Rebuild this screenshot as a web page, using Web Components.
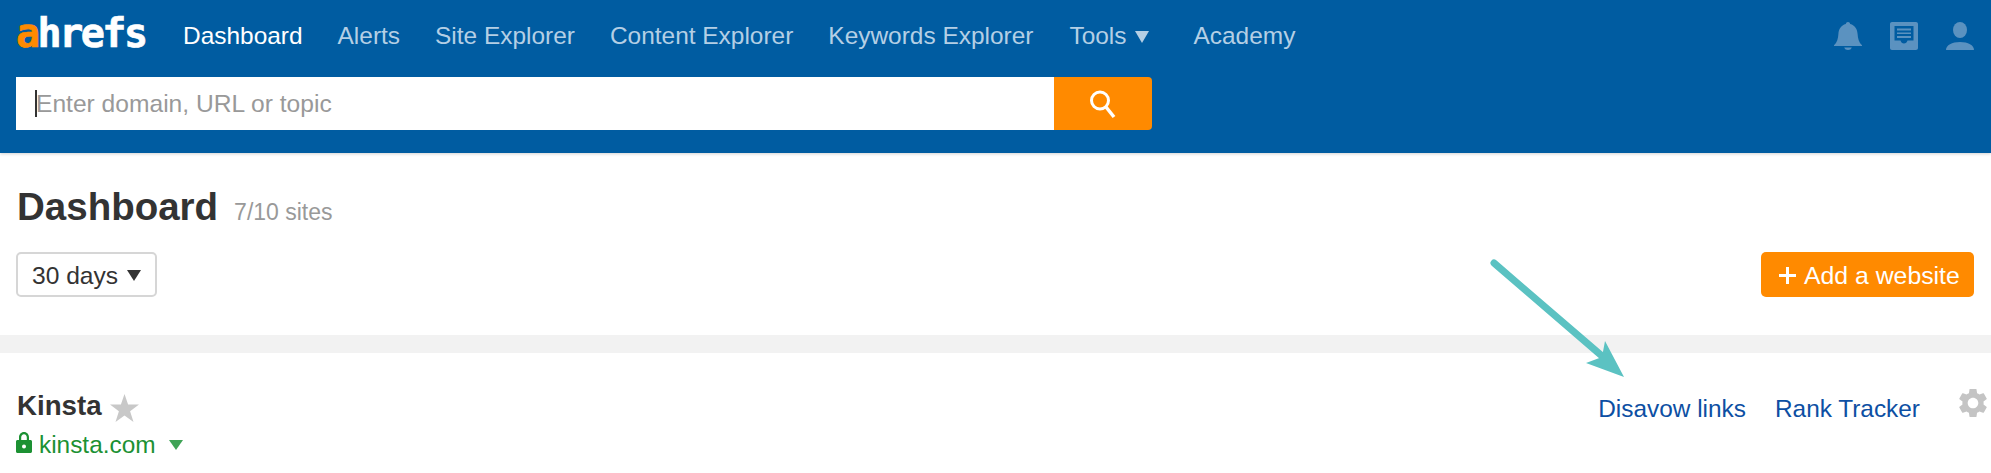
<!DOCTYPE html>
<html>
<head>
<meta charset="utf-8">
<title>Ahrefs Dashboard</title>
<style>
  html, body { margin: 0; padding: 0; background: #fff; overflow: hidden; }
  body { font-family: "Liberation Sans", Arial, sans-serif; color: #333; position: relative; height: 473px; }
</style>
</head>
<body>
<ah-topbar>
  <ah-nav-link active>Dashboard</ah-nav-link>
  <ah-nav-link>Alerts</ah-nav-link>
  <ah-nav-link>Site Explorer</ah-nav-link>
  <ah-nav-link>Content Explorer</ah-nav-link>
  <ah-nav-link>Keywords Explorer</ah-nav-link>
  <ah-nav-link menu>Tools</ah-nav-link>
  <ah-nav-link>Academy</ah-nav-link>
</ah-topbar>
<ah-dash-head></ah-dash-head>
<ah-site-row name="Kinsta" domain="kinsta.com">
  <a slot="links">Disavow links</a>
  <a slot="links">Rank Tracker</a>
</ah-site-row>
<ah-callout></ah-callout>

<script>
class AhNavLink extends HTMLElement {
  constructor() {
    super();
    this.attachShadow({ mode: 'open' });
  }

  connectedCallback() {
    const caret = this.hasAttribute('menu') ? '<span class="caret"></span>' : '';
    this.shadowRoot.innerHTML = `
      <style>
        :host {
          display: flex;
          align-items: center;
          font-size: 24.45px;
          line-height: 30px;
          color: #b4cfe5;
          white-space: nowrap;
        }
        :host([active]) { color: #fff; }
        :host([menu]) { padding-right: 9px; margin-left: 1px; }
        .caret {
          width: 0;
          height: 0;
          margin-left: 9px;
          margin-top: 2px;
          border-left: 7.5px solid transparent;
          border-right: 7.5px solid transparent;
          border-top: 12px solid #b4cfe5;
        }
      </style>
      <slot></slot>${caret}`;
  }
}

class AhTopbar extends HTMLElement {
  constructor() {
    super();
    this.attachShadow({ mode: 'open' });
  }

  connectedCallback() {
    this.shadowRoot.innerHTML = `
      <style>
        :host {
          display: block;
          background: #005ca1;
          height: 153px;
          box-shadow: 0 1px 3px rgba(0, 0, 0, .18);
          position: relative;
        }
        .top {
          display: flex;
          align-items: center;
          height: 77px;
          padding: 0 17px 5px 16px;
          box-sizing: border-box;
        }
        .logo {
          width: 167px;
          font: bold 40px/40px "DejaVu Sans Mono", monospace;
          letter-spacing: -2.5px;
          color: #fff;
          -webkit-text-stroke: .7px currentColor;
          margin-top: -6px;
        }
        .logo b { color: #ff8a00; }
        nav { display: flex; gap: 35px; flex: 1; }
        .icons { display: flex; gap: 28px; }
        .icons svg { display: block; width: 28px; height: 28px; fill: #5b92c0; }
        .search {
          display: flex;
          width: 1136px;
          height: 53px;
          margin-left: 16px;
        }
        .field {
          flex: 1;
          background: #fff;
          display: flex;
          align-items: center;
          padding-left: 19px;
          font-size: 24.6px;
          color: #999;
        }
        .field i {
          width: 2px;
          height: 27px;
          margin-right: -1px;
          background: #333;
        }
        .go {
          width: 98px;
          background: #ff8a00;
          border-radius: 0 4px 4px 0;
          display: flex;
          align-items: center;
          justify-content: center;
        }
        .go svg { display: block; width: 30px; height: 30px; }
      </style>
      <div class="top">
        <div class="logo"><b>a</b>hrefs</div>
        <nav><slot></slot></nav>
        <div class="icons">
          <svg viewBox="0 0 28 28"><path d="M14 0c1.2 0 2 .8 2.2 1.9C21 3.100 23.300 7 23.600 12c.3 4.800 1.200 8.200 4.400 11.300V24H0v-.7C3.200 20.200 4.100 16.800 4.400 12 4.700 7 7 3.100 11.800 1.900 12 .8 12.800 0 14 0z"/><path d="M10.200 25.500h7.600C17.300 27.200 15.800 28 14 28s-3.300-.8-3.800-2.500z"/></svg>
          <svg viewBox="0 0 28 28"><path fill-rule="evenodd" d="M2 0h24c1.100 0 2 .9 2 2v24c0 1.100-.9 2-2 2H2c-1.100 0-2-.9-2-2V2C0 .9.900 0 2 0zm2.500 4v14.500h6c.5 1.900 1.800 3 3.500 3s3-1.100 3.500-3h6V4h-19z"/><path d="M7 6.500h14v2H7zM7 10.500h14v1.500H7zM7 14h14v2H7z"/></svg>
          <svg viewBox="0 0 28 28"><ellipse cx="14" cy="8" rx="7" ry="8"/><path d="M0 28c0-5 6-8 14-8s14 3 14 8H0z"/></svg>
        </div>
      </div>
      <div class="search">
        <div class="field"><i></i><span>Enter domain, URL or topic</span></div>
        <div class="go">
          <svg viewBox="0 0 30 30" fill="none" stroke="#fff"><circle cx="12" cy="11.500" r="8.500" stroke-width="3"/><path d="M18 18l8 10" stroke-width="3.500"/></svg>
        </div>
      </div>`;
  }
}

class AhDashHead extends HTMLElement {
  constructor() {
    super();
    this.attachShadow({ mode: 'open' });
  }

  connectedCallback() {
    this.shadowRoot.innerHTML = `
      <style>
        :host {
          display: block;
          padding: 35px 17px 38px 16px;
        }
        .title { display: flex; align-items: baseline; gap: 16px; padding-left: 1px; }
        h1 { margin: 0; font-size: 38.5px; line-height: 38px; font-weight: bold; color: #333; }
        .count { font-size: 23px; color: #999; }
        .tools {
          display: flex;
          justify-content: space-between;
          align-items: flex-start;
          margin-top: 26px;
        }
        .period {
          box-sizing: border-box;
          width: 141px;
          height: 45px;
          border: 2px solid #d6d6d6;
          border-radius: 5px;
          display: flex;
          align-items: center;
          padding: 2px 0 0 14px;
          font-size: 24.6px;
          color: #333;
        }
        .period i {
          margin-left: 9px;
          border-left: 7px solid transparent;
          border-right: 7px solid transparent;
          border-top: 11px solid #333;
        }
        .add {
          box-sizing: border-box;
          width: 213px;
          height: 45px;
          background: #ff8a00;
          border-radius: 5px;
          color: #fff;
          font-size: 24.8px;
          display: flex;
          align-items: center;
          padding: 2px 0 0 18px;
          gap: 8px;
        }
        .add svg { width: 17px; height: 17px; display: block; }
      </style>
      <div class="title"><h1>Dashboard</h1><span class="count">7/10 sites</span></div>
      <div class="tools">
        <div class="period"><span>30 days</span><i></i></div>
        <div class="add">
          <svg viewBox="0 0 17 17"><path d="M7 0h3v7h7v3h-7v7H7v-7H0V7h7z" fill="#fff"/></svg>
          <span>Add a website</span>
        </div>
      </div>`;
  }
}

class AhSiteRow extends HTMLElement {
  constructor() {
    super();
    this.attachShadow({ mode: 'open' });
  }

  connectedCallback() {
    this.shadowRoot.innerHTML = `
      <style>
        :host {
          display: flex;
          justify-content: space-between;
          align-items: flex-start;
          border-top: 18px solid #f2f2f2;
          padding: 37px 4px 0 16px;
        }
        .name {
          display: flex;
          align-items: center;
          gap: 8px;
          font-size: 27.7px;
          line-height: 30px;
          font-weight: bold;
          color: #333;
          padding-left: 1px;
        }
        .star { display: block; width: 29px; height: 28px; margin-top: 4px; fill: #c8c8c8; }
        .domain {
          display: flex;
          align-items: center;
          margin-top: 8px;
          font-size: 24.4px;
          line-height: 30px;
          color: #1c9133;
        }
        .lock { display: block; width: 16px; height: 21px; margin-right: 7px; margin-top: -5px; fill: #1c9133; }
        .domain i {
          margin-left: 13px;
          margin-top: -1px;
          border-left: 7px solid transparent;
          border-right: 7px solid transparent;
          border-top: 10px solid #3fa356;
        }
        .right { display: flex; align-items: flex-start; }
        .links { display: flex; gap: 29px; font-size: 24.4px; line-height: 30px; color: #0d4fa3; padding-top: 4px; }
        .gear { display: block; width: 28px; height: 28px; margin-left: 39px; fill: #c4c4c4; margin-top: -1px; }
      </style>
      <div>
        <div class="name"><span>${this.getAttribute('name')}</span>
          <svg class="star" viewBox="0 0 29 28"><path d="M14.500 0l3.600 10.500H29l-8.900 6.700L23.500 28l-9-6.600L5.500 28l3.400-10.800L0 10.500h10.900z"/></svg>
        </div>
        <div class="domain">
          <svg class="lock" viewBox="0 0 16 21"><path fill-rule="evenodd" d="M3 8V5.500C3 2.400 5 0 8 0s5 2.400 5 5.500V8h1.500c.8 0 1.500.7 1.500 1.500V19.500c0 .8-.7 1.500-1.500 1.500h-13C.7 21 0 20.300 0 19.500V9.500C0 8.700.7 8 1.500 8H3zm2.200 0h5.600V5.500c0-1.900-1.100-3.300-2.800-3.300S5.200 3.600 5.200 5.500V8zM8 12.500a2 2 0 1 0 0 4 2 2 0 0 0 0-4z"/></svg>
          <span>${this.getAttribute('domain')}</span><i></i>
        </div>
      </div>
      <div class="right">
        <div class="links"><slot name="links"></slot></div>
        <svg class="gear" viewBox="2.500 2.500 19 19"><path d="M19.140 12.940c.04-.3.06-.61.06-.94 0-.32-.02-.64-.07-.94l2.030-1.580c.18-.14.23-.41.12-.61l-1.920-3.320c-.12-.22-.37-.29-.59-.22l-2.390.96c-.5-.38-1.030-.7-1.620-.94l-.36-2.540c-.04-.24-.24-.41-.48-.41h-3.840c-.24 0-.43.17-.47.41l-.36 2.540c-.59.24-1.130.57-1.620.94l-2.390-.96c-.22-.08-.47 0-.59.22L2.740 8.870c-.12.21-.08.47.12.61l2.030 1.580c-.05.3-.09.63-.09.94s.02.64.07.94l-2.030 1.580c-.18.14-.23.41-.12.61l1.920 3.320c.12.22.37.29.59.22l2.390-.96c.5.38 1.030.7 1.620.94l.36 2.540c.05.24.24.41.48.41h3.840c.24 0 .44-.17.47-.41l.36-2.540c.59-.24 1.130-.56 1.620-.94l2.390.96c.22.08.47 0 .59-.22l1.920-3.320c.12-.22.07-.47-.12-.61l-2.010-1.580zM12 15.600c-1.980 0-3.600-1.620-3.600-3.600s1.620-3.600 3.600-3.600 3.600 1.620 3.600 3.600-1.620 3.600-3.600 3.600z"/></svg>
      </div>`;
  }
}

// annotation drawn over the page, so this one is absolute
class AhCallout extends HTMLElement {
  constructor() {
    super();
    this.attachShadow({ mode: 'open' });
  }

  connectedCallback() {
    this.shadowRoot.innerHTML = `
      <style>
        :host { position: absolute; left: 1486px; top: 256px; width: 142px; height: 125px; pointer-events: none; }
        svg { display: block; width: 100%; height: 100%; }
      </style>
      <svg viewBox="1486 256 142 125">
        <path d="M1494 263L1602 356" stroke="#5bc2c2" stroke-width="7" stroke-linecap="round" fill="none"/>
        <path d="M1605 341L1624 377L1586 363L1602 357z" fill="#5bc2c2"/>
      </svg>`;
  }
}

customElements.define('ah-nav-link', AhNavLink);
customElements.define('ah-topbar', AhTopbar);
customElements.define('ah-dash-head', AhDashHead);
customElements.define('ah-site-row', AhSiteRow);
customElements.define('ah-callout', AhCallout);
</script>
</body>
</html>
